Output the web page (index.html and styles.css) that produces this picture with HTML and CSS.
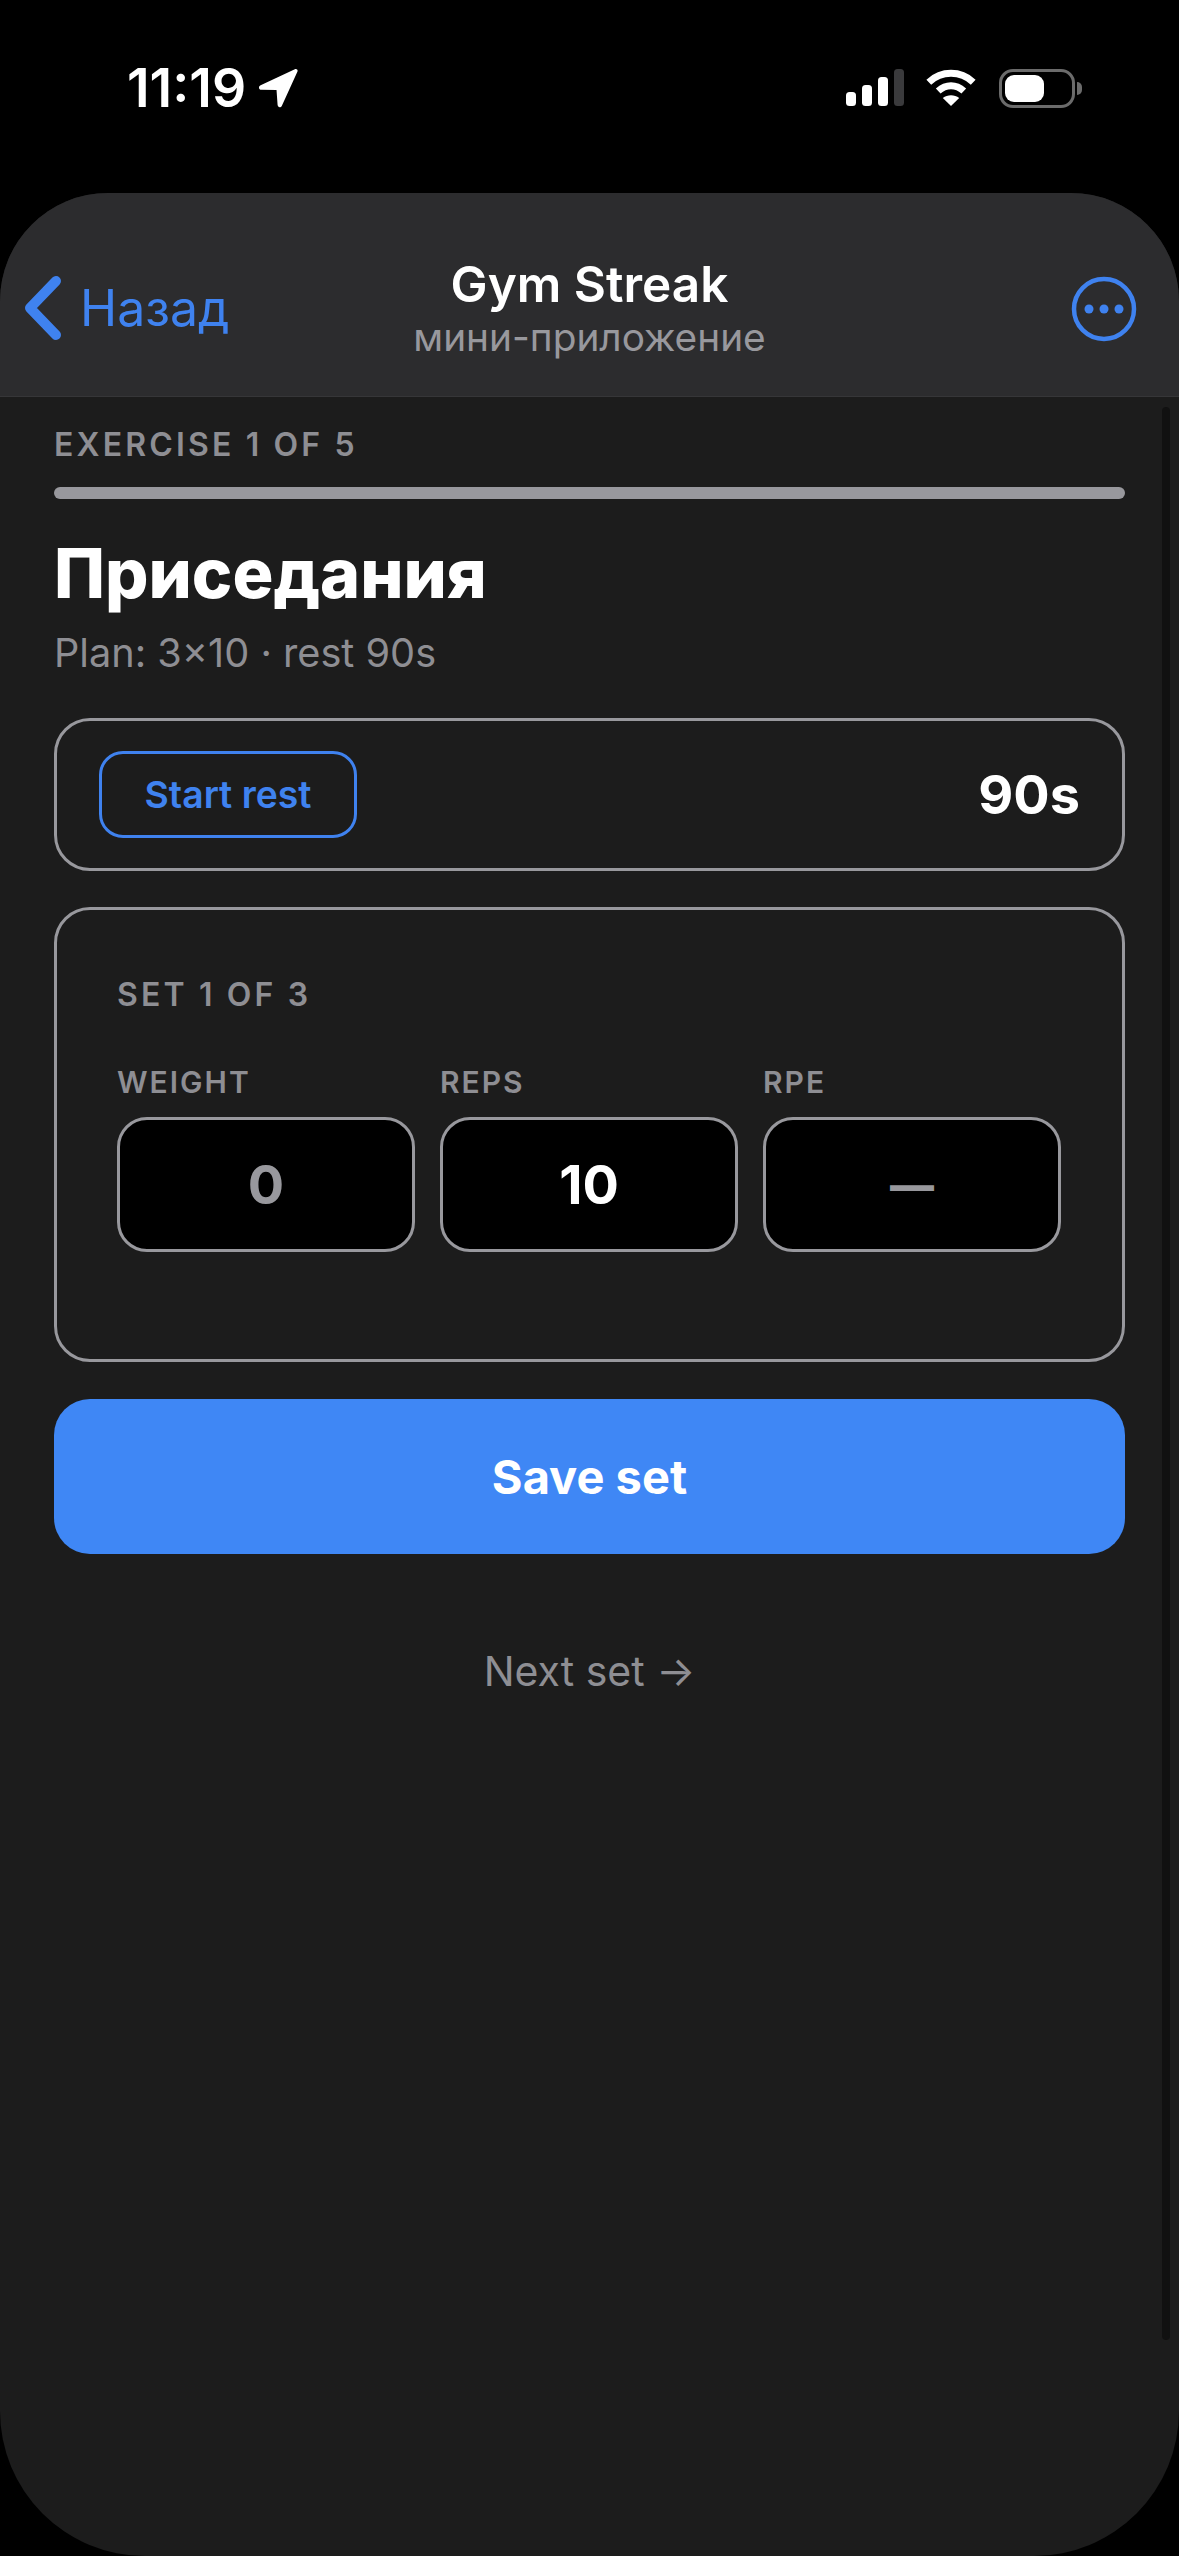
FILE: index.html
```html
<!DOCTYPE html>
<html lang="en">
<head>
    <meta charset="UTF-8">
    <meta name="viewport" content="width=device-width, initial-scale=1.0">
    <title>Gym Streak</title>
    <link rel="stylesheet" href="styles.css">
</head>
<body>
    <div class="status-bar">
        <div class="status-left">
            <span class="clock">11:19</span>
            <svg class="loc-icon" width="40" height="40" viewBox="0 0 38 38">
                <path d="M35 1.2 L2.5 16.5 C0 17.8 .6 20.6 3.4 20.7 L17.6 21 L18.6 35 C18.8 37.8 21.6 38.2 22.7 35.8 L37.4 3.6 C38.2 1.8 36.8 .4 35 1.2 Z" fill="#fff"/>
            </svg>
        </div>
        <div class="status-right">
            <svg class="signal-icon" width="58" height="38" viewBox="0 0 58 38">
                <rect x="0" y="23" width="10" height="14" rx="3.5" fill="#fff"/>
                <rect x="16" y="16" width="10" height="21" rx="3.5" fill="#fff"/>
                <rect x="32" y="8" width="10" height="29" rx="3.5" fill="#fff"/>
                <rect x="48" y="0" width="10" height="37" rx="3.5" fill="#3a3a3c"/>
            </svg>
            <svg class="wifi-icon" width="50" height="38" viewBox="0 0 50 38">
                <path d="M2.8 13.2 C15.5 1.4 34.5 1.4 47.2 13.2" fill="none" stroke="#fff" stroke-width="7"/>
                <path d="M12.2 22 C20 15 30 15 37.8 22" fill="none" stroke="#fff" stroke-width="7"/>
                <path d="M25 37 L16.8 29 C21.6 25.4 28.4 25.4 33.2 29 Z" fill="#fff"/>
            </svg>
            <div class="battery">
                <div class="battery-level"></div>
            </div>
            <div class="battery-nub"></div>
        </div>
    </div>

    <div class="sheet">
        <div class="nav">
            <div class="nav-back">
                <svg width="38" height="64" viewBox="0 0 38 64">
                    <path d="M32 5 L6 32 L32 59" fill="none" stroke="#3f82ef" stroke-width="10" stroke-linecap="round" stroke-linejoin="round"/>
                </svg>
                <span>Назад</span>
            </div>
            <div class="nav-title">
                <div class="app-name">Gym Streak</div>
                <div class="app-kind">мини-приложение</div>
            </div>
            <div class="nav-menu">
                <svg width="66" height="66" viewBox="0 0 66 66">
                    <circle cx="33" cy="33" r="30" fill="none" stroke="#3f82ef" stroke-width="4.5"/>
                    <circle cx="18" cy="33" r="4.5" fill="#3f82ef"/>
                    <circle cx="33" cy="33" r="4.5" fill="#3f82ef"/>
                    <circle cx="48" cy="33" r="4.5" fill="#3f82ef"/>
                </svg>
            </div>
        </div>

        <div class="content">
            <div class="caption">EXERCISE 1 OF 5</div>
            <div class="progress"></div>
            <h1 class="exercise-name">Приседания</h1>
            <div class="plan">Plan: 3×10 · rest 90s</div>

            <div class="card rest-card">
                <button class="rest-btn">Start rest</button>
                <span class="rest-time">90s</span>
            </div>

            <div class="card set-card">
                <div class="caption">SET 1 OF 3</div>
                <div class="fields">
                    <div class="field">
                        <div class="field-label">WEIGHT</div>
                        <div class="field-input muted">0</div>
                    </div>
                    <div class="field">
                        <div class="field-label">REPS</div>
                        <div class="field-input">10</div>
                    </div>
                    <div class="field">
                        <div class="field-label">RPE</div>
                        <div class="field-input muted dash">—</div>
                    </div>
                </div>
            </div>

            <button class="save-btn">Save set</button>
            <div class="next-link">Next set →</div>
        </div>

        <div class="scrollbar"></div>
    </div>
</body>
</html>
```

FILE: styles.css
```css
* {
    box-sizing: border-box;
}

body {
    margin: 0;
    width: 1179px;
    height: 2556px;
    display: flex;
    flex-direction: column;
    overflow: hidden;
    background: #000;
    color: #fff;
    font-family: 'Inter', 'Noto Sans', sans-serif;
}

/* status bar */
.status-bar {
    height: 193px;
    flex-shrink: 0;
    display: flex;
    justify-content: space-between;
    align-items: flex-start;
    padding: 68px 97px 0 127px;
}

.status-left {
    display: flex;
    align-items: center;
    gap: 12px;
    height: 40px;
}

.clock {
    font-size: 53.5px;
    font-weight: 600;
    line-height: 40px;
    letter-spacing: 0;
}

.status-right {
    display: flex;
    align-items: center;
    height: 40px;
}

.signal-icon {
    margin-right: 22px;
}

.wifi-icon {
    margin-right: 23px;
}

.battery {
    width: 76px;
    height: 39px;
    border: 3px solid #6b6b6b;
    border-radius: 14px;
    padding: 3px;
}

.battery-level {
    width: 39px;
    height: 100%;
    background: #fff;
    border-radius: 9px;
}

.battery-nub {
    width: 5px;
    height: 13px;
    margin-left: 2px;
    background: #6b6b6b;
    border-radius: 0 6px 6px 0;
}

/* sheet */
.sheet {
    flex: 1;
    position: relative;
    display: flex;
    flex-direction: column;
    background: #1c1c1c;
    border-radius: 108px 108px 145px 145px;
    overflow: hidden;
}

.nav {
    height: 204px;
    flex-shrink: 0;
    display: grid;
    grid-template-columns: 1fr auto 1fr;
    align-items: center;
    padding: 0 42px;
    background: #2c2c2e;
    border-bottom: 1px solid #363638;
}

.nav-back {
    display: flex;
    align-items: center;
    gap: 18px;
    margin-left: -18px;
    color: #3f82ef;
    font-size: 50px;
    padding-top: 26px;
}

.nav-title {
    text-align: center;
    padding-top: 24px;
}

.app-name {
    font-size: 49.5px;
    font-weight: 600;
    line-height: 58px;
}

.app-kind {
    font-size: 38.8px;
    line-height: 44px;
    margin-top: 2px;
    color: #98989d;
}

.nav-menu {
    display: flex;
    justify-content: flex-end;
    padding-top: 29px;
}

.nav-menu svg {
    display: block;
}

/* content */
.content {
    padding: 28px 54px 0;
    display: flex;
    flex-direction: column;
}

.caption {
    font-size: 32px;
    font-weight: 600;
    line-height: 40px;
    letter-spacing: 3.15px;
    color: #8e8e93;
}

.progress {
    height: 12px;
    margin-top: 22px;
    background: #98989d;
    border-radius: 6px;
}

.exercise-name {
    margin: 34px 0 0;
    font-size: 68.2px;
    font-weight: 800;
    line-height: 80px;
}

.plan {
    margin-top: 17px;
    font-size: 39.7px;
    line-height: 46px;
    color: #8e8e93;
}

.card {
    border: 3px solid #98989d;
    border-radius: 36px;
}

.rest-card {
    height: 153px;
    margin-top: 42px;
    padding: 0 42px;
    display: flex;
    justify-content: space-between;
    align-items: center;
}

.rest-btn {
    width: 258px;
    height: 87px;
    background: transparent;
    border: 3px solid #3f82ef;
    border-radius: 24px;
    color: #3f82ef;
    font-family: inherit;
    font-size: 37.3px;
    font-weight: 600;
}

.rest-time {
    font-size: 54px;
    font-weight: 700;
}

.set-card {
    margin-top: 36px;
    padding: 65px 61px 107px 60px;
}

.fields {
    display: grid;
    grid-template-columns: repeat(3, 1fr);
    gap: 25px;
    margin-top: 49px;
}

.field-label {
    font-size: 30px;
    font-weight: 600;
    line-height: 36px;
    letter-spacing: 2px;
    color: #8e8e93;
}

.field-input {
    height: 135px;
    margin-top: 17px;
    display: flex;
    align-items: center;
    justify-content: center;
    background: #000;
    border: 3px solid #98989d;
    border-radius: 30px;
    font-size: 54px;
    font-weight: 700;
}

.field-input.muted {
    color: #98989d;
}

.field-input.dash {
    font-size: 44px;
    font-weight: 800;
}

.save-btn {
    height: 155px;
    margin-top: 37px;
    background: #3f87f5;
    border: none;
    border-radius: 36px;
    color: #fff;
    font-family: inherit;
    font-size: 47px;
    font-weight: 700;
}

.next-link {
    margin-top: 91px;
    text-align: center;
    font-size: 41px;
    line-height: 52px;
    color: #8e8e93;
}

.scrollbar {
    position: absolute;
    top: 214px;
    right: 9px;
    width: 8px;
    height: 1933px;
    background: #111;
    border-radius: 4px;
}
```
